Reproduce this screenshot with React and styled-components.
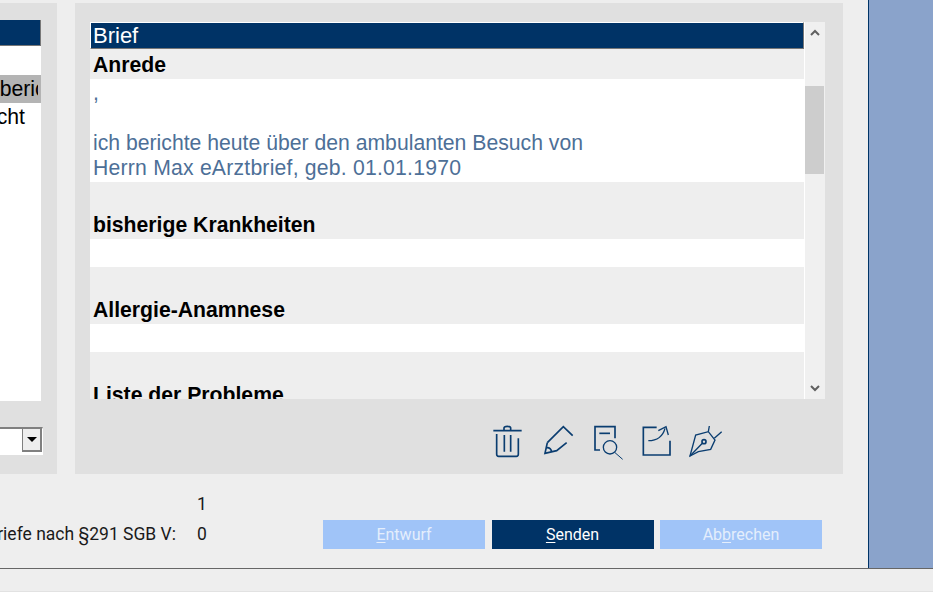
import styled, { createGlobalStyle } from "styled-components";

const Global = createGlobalStyle`
  html, body {
    margin: 0;
    background: #fff;
  }
  body {
    font-family: "Liberation Sans", Arial, sans-serif;
  }
`;

const navy = "#003366";

const Page = styled.div`
  width: 933px;
  height: 608px;
  overflow: hidden;
`;

const Main = styled.div`
  display: flex;
  height: 568px;
  background: #eeeeee;
  border-bottom: 1px solid #666;
`;

const Content = styled.div`
  width: 868px;
  display: flex;
  flex-direction: column;
`;

const SideStrip = styled.div`
  flex: 1;
  background: #8aa3cb;
  border-left: 1px solid ${navy};
`;

const StatusBar = styled.div`
  height: 22px;
  background: #eeeeee;
  border-bottom: 1px solid #e2e2e2;
`;

const Panels = styled.div`
  display: flex;
  gap: 18px;
  margin-top: 3px;
  height: 471px;
`;

const LeftPanel = styled.div`
  width: 57px;
  background: #e0e0e0;
  padding-top: 17px;
  box-sizing: border-box;
`;

const List = styled.div`
  width: 41px;
  height: 381px;
  background: #fff;
  overflow: hidden;
`;

const ListHead = styled.div`
  height: 26px;
  margin-bottom: 29px;
  background: ${navy};
  border-right: 1px solid #777;
  border-bottom: 1px solid #777;
  box-sizing: border-box;
`;

const ListRow = styled.div`
  height: 28px;
  line-height: 28px;
  font-size: 21.2px;
  color: #000;
  background: ${(p) => (p.$selected ? "#b4b4b4" : "#fff")};
  white-space: nowrap;
`;

const ListText = styled.div`
  width: ${(p) => 38 + p.$shift}px;
  margin-left: ${(p) => -p.$shift}px;
  overflow: hidden;
`;

const Combo = styled.div`
  display: flex;
  justify-content: flex-end;
  width: 43px;
  height: 28px;
  margin-top: 26px;
  box-sizing: border-box;
  background: #fff;
  border-top: 2px solid #808080;
  border-bottom: 1px solid #fff;
  border-right: 1px solid #fff;
  position: relative;
`;

const ComboButton = styled.div`
  width: 20px;
  height: 23px;
  box-sizing: border-box;
  background: #eeeeee;
  border-left: 1px solid #808080;
  border-right: 2px solid #808080;
  border-bottom: 2px solid #808080;
  display: flex;
  align-items: center;
  justify-content: center;
  &::after {
    content: "";
    border-left: 5px solid transparent;
    border-right: 5px solid transparent;
    border-top: 5px solid #000;
  }
`;

const RightPanel = styled.div`
  width: 768px;
  background: #e0e0e0;
  padding: 19px 18px 0 15px;
  box-sizing: border-box;
`;

const Pane = styled.div`
  display: flex;
  height: 377px;
  overflow: hidden;
`;

const Letter = styled.div`
  width: 714px;
  overflow: hidden;
  background: #eeeeee;
`;

const LetterTitle = styled.div`
  height: 27px;
  box-sizing: border-box;
  background: ${navy};
  color: #fff;
  font-size: 22px;
  line-height: 25px;
  padding-left: 2px;
  border-top: 1px solid #fff;
  border-left: 1px solid #fff;
  border-right: 1px solid #777;
  border-bottom: 1px solid #777;
`;

const SectionHead = styled.div`
  font-size: 21.2px;
  font-weight: bold;
  color: #000;
  line-height: 28px;
  padding-left: 3px;
  padding-top: ${(p) => (p.$top || 0) + 2}px;
`;

const SectionBody = styled.div`
  background: #fff;
  color: #4d6f97;
  font-size: 21.2px;
  line-height: 25px;
  padding-left: 3px;
  min-height: 28px;
  padding-top: ${(p) => (p.$bottom ? 1 : 0)}px;
  padding-bottom: ${(p) => p.$bottom || 0}px;
`;

const BodyLine = styled.div`
  height: 25px;
  letter-spacing: ${(p) => p.$track || 0}px;
`;

const Scrollbar = styled.div`
  width: 21px;
  background: #f0f0f0;
  border-left: 1px solid #fff;
  box-sizing: border-box;
  position: relative;
  display: flex;
  flex-direction: column;
  justify-content: space-between;
  align-items: center;
  padding: 7px 0;
`;

const Thumb = styled.div`
  position: absolute;
  top: 64px;
  left: 0;
  width: 19px;
  height: 88px;
  background: #cdcdcd;
`;

const Tools = styled.div`
  display: flex;
  gap: 15px;
  margin: 26px 0 0 399px;
`;

const ToolIcon = styled.svg`
  width: 34px;
  height: 35px;
  overflow: visible;
  fill: none;
  stroke: #0a3d70;
  stroke-width: 5;
`;

const Footer = styled.div`
  flex: 1;
  display: flex;
  justify-content: space-between;
  padding-right: 46px;
`;

const Stats = styled.div`
  padding-top: 15px;
  font-family: Roboto, sans-serif;
  font-size: 17.5px;
  color: #1a1a1a;
`;

const StatRow = styled.div`
  display: flex;
  height: 30px;
  line-height: 30px;
`;

const StatLabel = styled.div`
  width: 176px;
  display: flex;
  justify-content: flex-end;
  overflow: hidden;
  white-space: nowrap;
`;

const StatValue = styled.div`
  margin-left: 21px;
`;

const Buttons = styled.div`
  display: flex;
  gap: 6.5px;
  margin-top: 46px;
`;

const Button = styled.div`
  width: 162px;
  height: 29px;
  line-height: 29px;
  text-align: center;
  font-family: Roboto, sans-serif;
  font-size: 16px;
  color: ${(p) => (p.$primary ? "#fff" : "#e4eefc")};
  background: ${(p) => (p.$primary ? navy : "#a0c4f8")};
  u {
    text-underline-offset: 2px;
  }
`;

const Chevron = ({ up }) => (
  <svg width="10" height="7" viewBox="0 0 10 7">
    <path d={up ? "M1 6 L5 2 L9 6" : "M1 1 L5 5 L9 1"} fill="none" stroke="#606060" strokeWidth="2" />
  </svg>
);

export default function App() {
  return (
    <Page>
      <Global />
      <Main>
        <Content>
          <Panels>
            <LeftPanel>
              <List>
                <ListHead />
                <ListRow $selected>
                  <ListText $shift={38}>Arztbericht</ListText>
                </ListRow>
                <ListRow>
                  <ListText $shift={41}>Bericht</ListText>
                </ListRow>
              </List>
              <Combo>
                <ComboButton />
              </Combo>
            </LeftPanel>
            <RightPanel>
              <Pane>
                <Letter>
                  <LetterTitle>Brief</LetterTitle>
                  <SectionHead>Anrede</SectionHead>
                  <SectionBody $bottom={2}>
                    <BodyLine>,</BodyLine>
                    <BodyLine />
                    <BodyLine>ich berichte heute über den ambulanten Besuch von</BodyLine>
                    <BodyLine $track={0.21}>Herrn Max eArztbrief, geb. 01.01.1970</BodyLine>
                  </SectionBody>
                  <SectionHead $top={27}>bisherige Krankheiten</SectionHead>
                  <SectionBody />
                  <SectionHead $top={27}>Allergie-Anamnese</SectionHead>
                  <SectionBody />
                  <SectionHead $top={27}>Liste der Probleme</SectionHead>
                </Letter>
                <Scrollbar>
                  <Chevron up />
                  <Thumb />
                  <Chevron />
                </Scrollbar>
              </Pane>
              <Tools>
                <ToolIcon viewBox="0 0 102 105">
                  <path d="M13 17 H98 M45 17 V9 Q45 4 55 4 Q65 4 65 9 V17" />
                  <path d="M23 27 V88 Q23 94 29 94 H82 Q88 94 88 88 V40" />
                  <path d="M46 30 V80 M65 30 V80" />
                </ToolIcon>
                <ToolIcon viewBox="0 0 102 105">
                  <path d="M28 53 L76 5 L104 32" />
                  <path d="M28 53 L21 85 L56 77 L86 53" />
                  <path d="M24 68 Q38 66 41 80" />
                </ToolIcon>
                <ToolIcon viewBox="0 0 102 105">
                  <path d="M84 40 V5 H24 V75 H39" />
                  <path d="M37 25 H69" />
                  <circle cx="69" cy="67" r="20" strokeWidth="4" />
                  <path d="M84 83 L107 103" strokeWidth="3" />
                </ToolIcon>
                <ToolIcon viewBox="0 0 102 105">
                  <path d="M62 7 H22 V90 H102 V47" />
                  <path d="M37 47 Q77 47 87 10" strokeWidth="4" />
                  <path d="M67 17 L90 5 L97 30" strokeWidth="4" />
                </ToolIcon>
                <ToolIcon viewBox="0 0 102 105">
                  <path d="M15 93 L32 30 L70 20 L90 45 L77 73 L40 80 Z" strokeWidth="4" />
                  <circle cx="57" cy="50" r="6" strokeWidth="5" />
                  <path d="M15 93 L52 55 M88 40 L110 20 M70 20 L73 3" strokeWidth="4" />
                </ToolIcon>
              </Tools>
            </RightPanel>
          </Panels>
          <Footer>
            <Stats>
              <StatRow>
                <StatLabel />
                <StatValue>1</StatValue>
              </StatRow>
              <StatRow>
                <StatLabel>Arztbriefe nach §291 SGB V:</StatLabel>
                <StatValue>0</StatValue>
              </StatRow>
            </Stats>
            <Buttons>
              <Button>
                <u>E</u>ntwurf
              </Button>
              <Button $primary>
                <u>S</u>enden
              </Button>
              <Button>
                Ab<u>b</u>rechen
              </Button>
            </Buttons>
          </Footer>
        </Content>
        <SideStrip />
      </Main>
      <StatusBar />
    </Page>
  );
}
